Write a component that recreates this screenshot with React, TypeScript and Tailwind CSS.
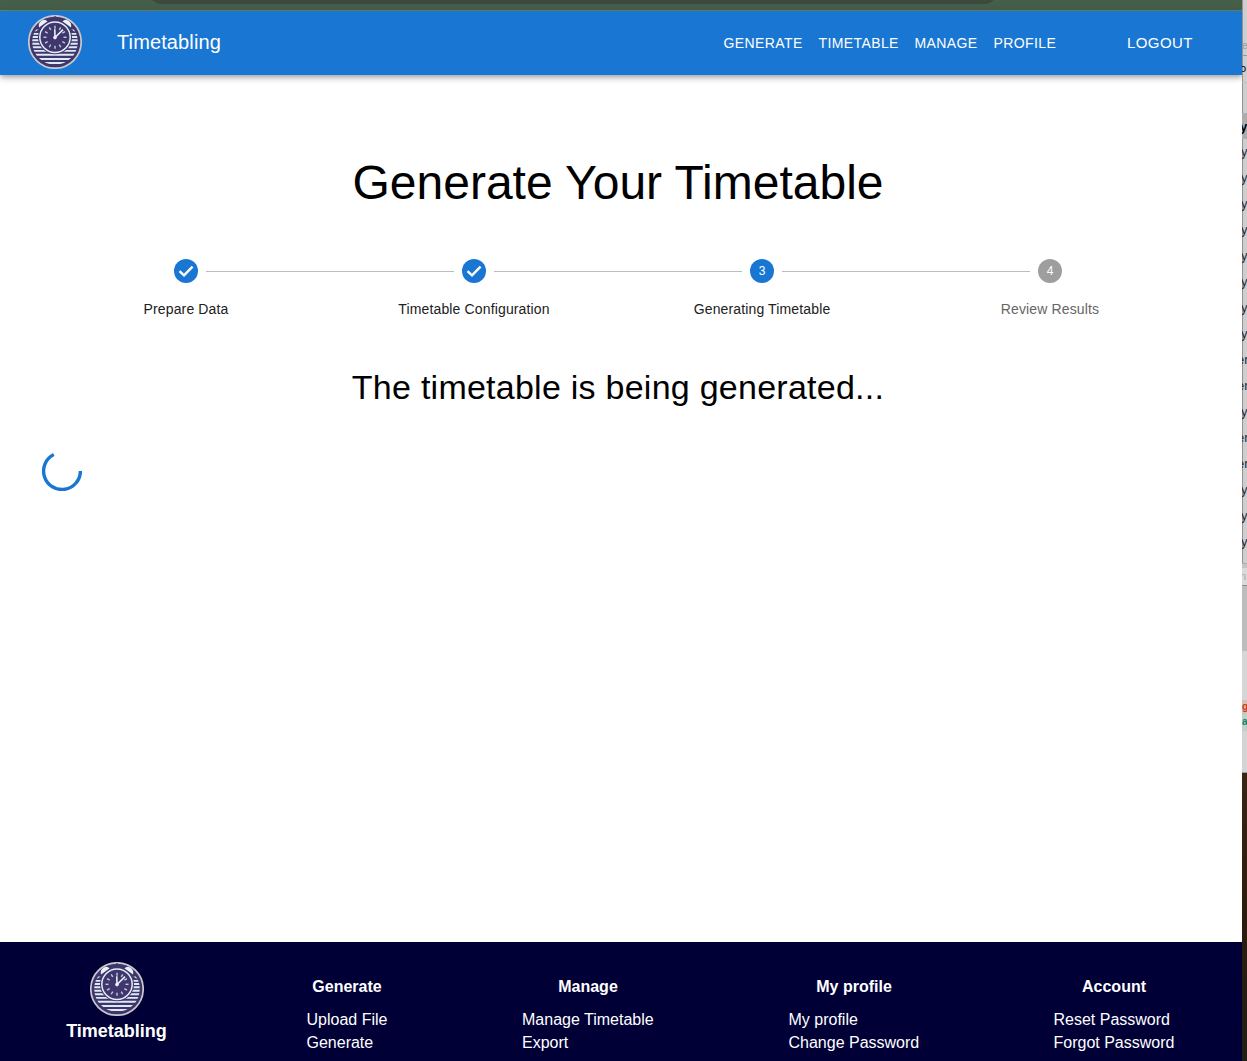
import React from "react";

const ticks = Array.from({ length: 12 }, (_, i) => i * 30);
const stripes = [15.5, 18.7, 22, 25.3, 28.7, 32.2, 35.9, 39.8, 44, 48];

function Logo({ id }: { id: string }) {
  return (
    <svg viewBox="0 0 54 54" className="block h-[54px] w-[54px] shrink-0">
      <defs>
        <clipPath id={id}>
          <circle cx="27" cy="27" r="22.8" />
        </clipPath>
      </defs>
      <circle cx="27" cy="27" r="26.2" fill="#41366b" stroke="#c9c8cd" strokeWidth="1.7" />
      <g clipPath={`url(#${id})`} stroke="#dceaf6" strokeWidth="1.9">
        {stripes.map((y) => (
          <path key={y} d={`M3 ${y}H51`} />
        ))}
      </g>
      <path d="M6 18 27 1 48 18Z" fill="#41366b" />
      <path d="M11 12.5Q9.8 8 13.8 5.5Q17.5 3.8 19.5 6.5ZM43 12.5Q44.2 8 40.2 5.5Q36.5 3.8 34.5 6.5Z" fill="#e6f1fa" />
      <circle cx="27" cy="22.3" r="17" fill="#41366b" />
      <circle cx="27" cy="22.3" r="15.2" fill="#41366b" stroke="#e1effa" strokeWidth="1.5" />
      <g stroke="#b9cde7" strokeWidth="1.4">
        {ticks.map((a) => (
          <path key={a} d="M27 10.8V13.8" transform={`rotate(${a} 27 22.3)`} />
        ))}
      </g>
      <path d="M27 22.5 26.8 14.2M27 22.5 35 14.6" stroke="#e6f1fa" strokeWidth="1.6" />
      <circle cx="27" cy="22.6" r="1.8" fill="#e6f1fa" />
    </svg>
  );
}

function Connector() {
  return <div className="mt-3 h-px w-[248px] shrink-0 bg-[#bdbdbd]" />;
}

function Step({ n, label, state }: { n: number; label: string; state: "done" | "active" | "idle" }) {
  const idle = state === "idle";
  return (
    <div className="flex w-6 shrink-0 flex-col items-center">
      <svg viewBox="0 0 24 24" className={idle ? "h-6 w-6 text-[#9e9e9e]" : "h-6 w-6 text-[#1976d2]"}>
        <circle cx="12" cy="12" r="12" fill="currentColor" />
        {state === "done" ? (
          <path fill="none" stroke="#fff" strokeWidth="2.4" d="M5.5 12.1 10 16.4 18.6 7.6" />
        ) : (
          <text x="12" y="16" textAnchor="middle" fontSize="12" fill="#fff">{n}</text>
        )}
      </svg>
      <span className={"mt-4 text-[14px] leading-5 tracking-[0.14px] whitespace-nowrap " + (idle ? "text-[#666666]" : "text-[#212121]")}>
        {label}
      </span>
    </div>
  );
}

function FooterColumn({ title, links, className }: { title: string; links: string[]; className: string }) {
  return (
    <div className={"shrink-0 text-[16px] whitespace-nowrap " + className}>
      <h3 className="mt-[33px] text-center leading-[23px] font-bold">{title}</h3>
      <ul className="mt-[10px]">
        {links.map((l) => (
          <li key={l} className="leading-[23px]">{l}</li>
        ))}
      </ul>
    </div>
  );
}

const fragments = ["y", "y", "y", "y", "y", "y", "y", "y", "er", "er", "y", "er", "er", "y", "y", "y"];

function BackgroundStrip() {
  return (
    <aside className="flex w-[5px] shrink-0 flex-col overflow-hidden bg-[#cecece] text-[13px] text-[#292929] shadow-[inset_1px_0_0_#929292]">
      <div className="h-[56px] shrink-0 border-b border-[#969696] pt-[38px] text-[10px] leading-4 text-[#999]">e</div>
      <div className="h-[27px] shrink-0 border-b border-[#c0c0c0] text-[11px] leading-[25px] text-black"><span className="-ml-[2px]">o</span></div>
      <div className="h-[30px] shrink-0" />
      <div className="h-[26px] shrink-0 bg-[#adadad] leading-[27px] font-bold text-black"><span className="-ml-[2px]">y</span></div>
      {fragments.map((f, i) => (
        <div key={i} className="h-[26px] shrink-0 leading-[26px] whitespace-nowrap">
          <span className={f === "y" ? "-ml-[1px]" : "-ml-[5px]"}>{f}</span>
        </div>
      ))}
      <div className="mt-2 h-[5px] shrink-0 border-t border-[#aaa] bg-[#c4c4c4]" />
      <div className="h-[18px] shrink-0 border-b border-[#8c8c8c] bg-[#dadada] text-[11px] leading-[17px] text-[#aaa]"><span className="-ml-[2px]">n</span></div>
      <div className="h-[65px] shrink-0 bg-[#bcbcbc]" />
      <div className="h-[49px] shrink-0 bg-[#d6d6d6]" />
      <div className="h-[14px] shrink-0 bg-[#d9beb4] text-[10px] leading-[13px] font-bold text-[#bd4318]">g</div>
      <div className="h-[17px] shrink-0 bg-[#bcd3c9] text-[10px] leading-[15px] font-bold text-[#168057]">a</div>
      <div className="h-[42px] shrink-0 border-b border-[#999] bg-[#d4d4d4]" />
      <div className="flex-1 bg-linear-to-b from-[#3a2514] via-[#2d1b0c] via-50% to-[#211d17]" />
    </aside>
  );
}

export default function App() {
  return (
    <div className="flex h-[1061px] w-[1247px] overflow-hidden bg-white font-['Liberation_Sans',Arial,sans-serif]">
      <div className="flex w-[1242px] shrink-0 flex-col overflow-hidden">
        <div className="h-[11px] shrink-0 overflow-hidden border-b border-[#68846b] bg-[#465f49]">
          <div className="-mt-6 ml-[148px] h-7 w-[850px] rounded-b-[14px] bg-[#3c4a3e]" />
        </div>
        <header className="flex h-16 shrink-0 items-center bg-[#1976d2] pl-7 text-white shadow-[0_2px_4px_-1px_rgba(0,0,0,0.2),0_4px_5px_rgba(0,0,0,0.14),0_1px_10px_rgba(0,0,0,0.12)]">
          <div className="-mt-[2px]"><Logo id="header-logo" /></div>
          <span className="-mt-[2px] ml-[35px] w-[606.5px] text-[20px] tracking-[0.12px]">Timetabling</span>
          <nav className="flex text-[14px] tracking-[0.4px]">
            <a className="w-[95px]">GENERATE</a>
            <a className="w-[96px]">TIMETABLE</a>
            <a className="w-[79px]">MANAGE</a>
            <a className="w-[133.5px]">PROFILE</a>
          </nav>
          <a className="text-[15px] tracking-[0.43px]">LOGOUT</a>
        </header>

        <main className="flex w-[1236px] flex-1 flex-col">
          <h1 className="mt-[80px] text-center text-[48px] leading-[56px] text-black">Generate Your Timetable</h1>
          <div className="mt-12 ml-[174px] flex gap-2">
            <Step n={1} label="Prepare Data" state="done" />
            <Connector />
            <Step n={2} label="Timetable Configuration" state="done" />
            <Connector />
            <Step n={3} label="Generating Timetable" state="active" />
            <Connector />
            <Step n={4} label="Review Results" state="idle" />
          </div>
          <h2 className="mt-[47px] text-center text-[34px] leading-[42px] tracking-[0.25px] text-black">The timetable is being generated...</h2>
          <svg viewBox="0 0 40 40" className="mt-[43px] ml-[42px] h-10 w-10 text-[#1976d2]">
            <path d="M11.8 3.6A18.4 18.4 0 1 0 38.4 20" fill="none" stroke="currentColor" strokeWidth="3.4" />
          </svg>
        </main>

        <footer className="flex h-[119px] shrink-0 overflow-hidden bg-[#000037] text-white">
          <div className="mt-5 ml-[66px] flex w-[101px] shrink-0 flex-col items-center">
            <Logo id="footer-logo" />
            <span className="mt-[3px] text-[18px] leading-6 font-bold">Timetabling</span>
          </div>
          <FooterColumn className="ml-[139.5px] w-[81px]" title="Generate" links={["Upload File", "Generate"]} />
          <FooterColumn className="ml-[134.5px] w-[132px]" title="Manage" links={["Manage Timetable", "Export"]} />
          <FooterColumn className="ml-[134.5px] w-[131px]" title="My profile" links={["My profile", "Change Password"]} />
          <FooterColumn className="ml-[134px] w-[121px]" title="Account" links={["Reset Password", "Forgot Password"]} />
        </footer>
      </div>
      <BackgroundStrip />
    </div>
  );
}
